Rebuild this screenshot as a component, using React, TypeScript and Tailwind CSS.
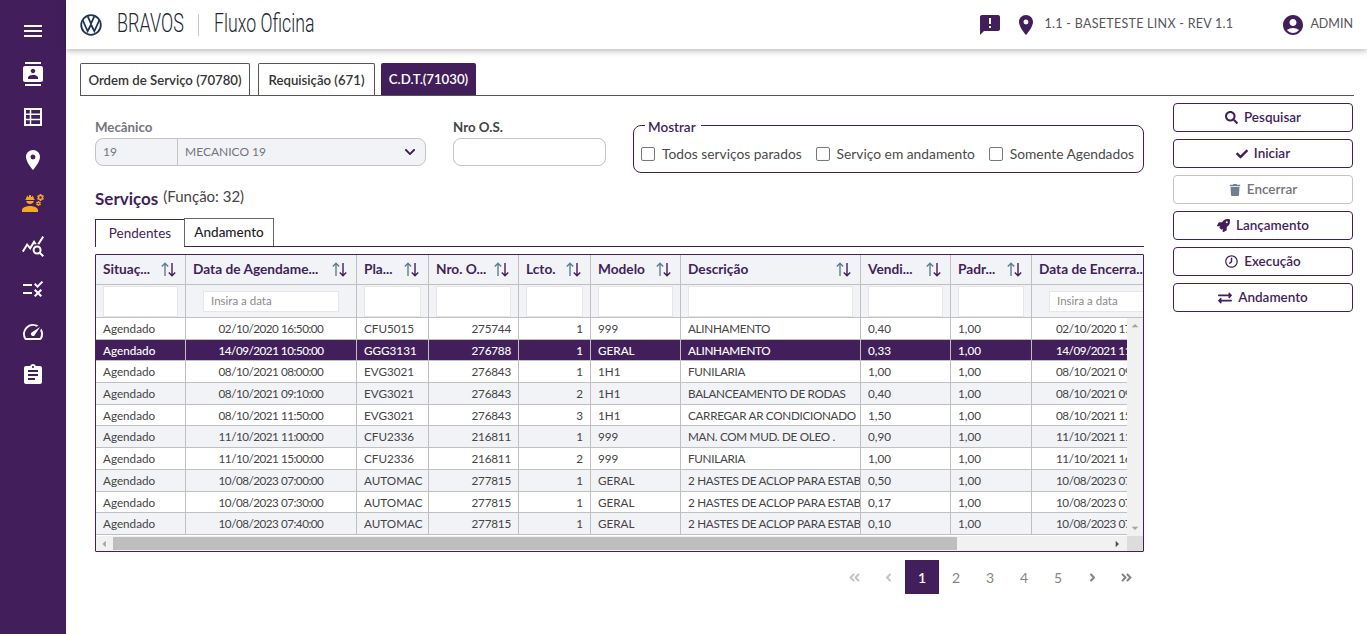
import React from "react";
import {
  MdMenu, MdContacts, MdLocationOn, MdEngineering, MdQueryStats, MdRule, MdAssignment, MdAnnouncement, MdAccountCircle, MdSpeed, MdArrowDropUp, MdArrowDropDown, MdArrowLeft, MdArrowRight,
} from "react-icons/md";
import { FaSearch, FaCheck, FaTrash, FaRocket, FaRegClock, FaExchangeAlt, FaChevronDown, FaAngleDoubleLeft, FaAngleLeft, FaAngleRight, FaAngleDoubleRight } from "react-icons/fa";

const cols = [
  { t: "Situaç...", c: "" },
  { t: "Data de Agendame...", c: "text-center tracking-[-0.5px]", date: true },
  { t: "Pla...", c: "" },
  { t: "Nro. O...", c: "text-right tracking-[-0.2px]" },
  { t: "Lcto.", c: "text-right" },
  { t: "Modelo", c: "" },
  { t: "Descrição", c: "tracking-[-0.3px]" },
  { t: "Vendi...", c: "" },
  { t: "Padr...", c: "" },
  { t: "Data de Encerra...", c: "text-center tracking-[-0.5px]", date: true, nosort: true },
];

const rows = [
  ["Agendado", "02/10/2020 16:50:00", "CFU5015", "275744", "1", "999", "ALINHAMENTO", "0,40", "1,00", "02/10/2020 17:10:00"],
  ["Agendado", "14/09/2021 10:50:00", "GGG3131", "276788", "1", "GERAL", "ALINHAMENTO", "0,33", "1,00", "14/09/2021 11:10:00"],
  ["Agendado", "08/10/2021 08:00:00", "EVG3021", "276843", "1", "1H1", "FUNILARIA", "1,00", "1,00", "08/10/2021 09:00:00"],
  ["Agendado", "08/10/2021 09:10:00", "EVG3021", "276843", "2", "1H1", "BALANCEAMENTO DE RODAS", "0,40", "1,00", "08/10/2021 09:30:00"],
  ["Agendado", "08/10/2021 11:50:00", "EVG3021", "276843", "3", "1H1", "CARREGAR AR CONDICIONADO", "1,50", "1,00", "08/10/2021 15:20:00"],
  ["Agendado", "11/10/2021 11:00:00", "CFU2336", "216811", "1", "999", "MAN. COM MUD. DE OLEO .", "0,90", "1,00", "11/10/2021 11:50:00"],
  ["Agendado", "11/10/2021 15:00:00", "CFU2336", "216811", "2", "999", "FUNILARIA", "1,00", "1,00", "11/10/2021 16:00:00"],
  ["Agendado", "10/08/2023 07:00:00", "AUTOMAC", "277815", "1", "GERAL", "2 HASTES DE ACLOP PARA ESTABILIZADOR", "0,50", "1,00", "10/08/2023 07:30:00"],
  ["Agendado", "10/08/2023 07:30:00", "AUTOMAC", "277815", "1", "GERAL", "2 HASTES DE ACLOP PARA ESTABILIZADOR", "0,17", "1,00", "10/08/2023 07:40:00"],
  ["Agendado", "10/08/2023 07:40:00", "AUTOMAC", "277815", "1", "GERAL", "2 HASTES DE ACLOP PARA ESTABILIZADOR", "0,10", "1,00", "10/08/2023 07:50:00"],
];

const gridCols = "grid-cols-[90px_171px_72px_90px_72px_90px_180px_90px_81px_153px]";

function SortIcon() {
  return (
    <svg width="17" height="15" viewBox="0 0 17 15" fill="none" strokeWidth="1.4" className="shrink-0">
      <path d="M5 14V1.5M1.8 4.6 5 1.2l3.2 3.4" stroke="#5f7f8f" />
      <path d="M12 1v12.5M8.8 10.4l3.2 3.4 3.2-3.4" stroke="#421f5a" />
    </svg>
  );
}

function VwLogo() {
  return (
    <svg width="22" height="22" viewBox="0 0 44 44" fill="none" stroke="#1f3258">
      <circle cx="22" cy="22" r="19.6" strokeWidth="3.6" />
      <path d="M15.5 4.8 22 19l6.5-14.2M5.5 12.5 15.3 34.5 21.6 22h.8l6.3 12.5 9.8-22" strokeWidth="3.6" strokeLinejoin="miter" />
    </svg>
  );
}

function GridIcon() {
  return (
    <svg width="18" height="18" viewBox="0 0 18 18" fill="none" stroke="#fff" strokeWidth="1.5">
      <rect x="1" y="1" width="16" height="16" strokeWidth="2" />
      <path d="M6.5 1v16M1 6.3h16M1 11.6h16" />
    </svg>
  );
}

function ActionButton({ icon, label, disabled }: { icon: React.ReactNode; label: string; disabled?: boolean }) {
  return (
    <button
      className={
        "h-[29px] w-full flex items-center justify-center gap-[6px] rounded-[4px] border bg-white text-[13.5px] font-semibold " +
        (disabled ? "border-[#c4c4c4] text-[#74747c]" : "border-[#421f5a] text-[#421f5a]")
      }
    >
      {icon}
      <span>{label}</span>
    </button>
  );
}

function Check({ label }: { label: string }) {
  return (
    <label className="flex items-center gap-[7px] text-[13.8px] text-[#4a4a4a]">
      <span className="w-[14px] h-[14px] rounded-[2px] border border-[#777] bg-white shrink-0" />
      {label}
    </label>
  );
}

function Pager({ children, active, muted }: { children: React.ReactNode; active?: boolean; muted?: boolean }) {
  return (
    <span
      className={
        "w-[34px] h-[34px] flex items-center justify-center text-[14px] " +
        (active ? "bg-[#421f5a] text-white font-semibold" : muted ? "text-[#c4c4c4]" : "text-[#858585]")
      }
    >
      {children}
    </span>
  );
}

export default function App() {
  return (
    <div className="flex h-screen w-full overflow-hidden bg-white font-['Lato','Noto_Sans',sans-serif] text-[#444]">
      <aside className="w-[66px] shrink-0 bg-[#421f5a] flex flex-col items-center pt-[19px] gap-[19px] text-white">
        <MdMenu size={24} />
        <MdContacts size={24} />
        <span className="my-[3px]"><GridIcon /></span>
        <MdLocationOn size={24} />
        <MdEngineering size={24} className="text-[#f7a823]" />
        <MdQueryStats size={24} />
        <MdRule size={24} />
        <MdSpeed size={24} />
        <MdAssignment size={24} />
      </aside>

      <div className="flex-1 min-w-0 flex flex-col">
        <header className="h-[49px] shrink-0 bg-white shadow-[0_2px_6px_rgba(0,0,0,0.28)] flex items-center pl-[14px] pr-[14px] relative">
          <VwLogo />
          <span className="ml-[15px] mb-[2px] w-[66px] text-[25px] font-light text-[#1c2733] font-['Roboto',sans-serif] whitespace-nowrap inline-block origin-left scale-x-[0.72]">BRAVOS</span>
          <span className="ml-[15px] w-px h-[22px] bg-[#c9c9c9]" />
          <span className="ml-[15px] mb-[2px] text-[25px] font-light text-[#1c2733] font-['Roboto',sans-serif] whitespace-nowrap inline-block origin-left scale-x-[0.71]">Fluxo Oficina</span>
          <div className="ml-auto flex items-center text-[12.5px] text-[#55555c]">
            <MdAnnouncement size={24} className="text-[#421f5a]" />
            <MdLocationOn size={24} className="ml-[12px] text-[#421f5a]" />
            <span className="ml-[7px] tracking-[0.28px]">1.1 - BASETESTE LINX - REV 1.1</span>
            <MdAccountCircle size={24} className="ml-[48px] text-[#421f5a]" />
            <span className="ml-[5px]">ADMIN</span>
          </div>
        </header>

        <main className="flex-1 min-h-0 pl-[14px] pr-[13px] pt-[15px]">
          <nav className="flex items-end border-b border-[#555] h-[32px]">
            <span className="h-[32px] w-[170px] pt-[2px] border border-b-0 border-[#555] rounded-t-[2px] flex items-center justify-center text-[13.2px] font-semibold text-[#333]">Ordem de Serviço (70780)</span>
            <span className="ml-[8px] h-[32px] w-[117px] pt-[2px] border border-b-0 border-[#555] rounded-t-[2px] flex items-center justify-center text-[13.2px] font-semibold text-[#333]">Requisição (671)</span>
            <span className="ml-[6px] h-[32px] w-[95px] pt-[2px] bg-[#421f5a] rounded-t-[2px] flex items-center justify-center text-[13.2px] font-semibold text-white">C.D.T.(71030)</span>
          </nav>

          <div className="flex">
            <section className="ml-[15px] w-[1049px]">
              <div className="flex items-start pt-[22px] h-[83px]">
                <div className="mt-[1px] w-[331px]">
                  <div className="text-[13.3px] font-bold text-[#75757d] leading-[16px] mb-[3px]">Mecânico</div>
                  <div className="h-[28px] flex items-center rounded-[8px] border border-[#c4c4c4] bg-[#f2f3f7] text-[12px] text-[#74747c]">
                    <span className="w-[82px] pl-[7px] border-r border-[#c4c4c4] h-full flex items-center">19</span>
                    <span className="flex-1 pl-[7px]">MECANICO 19</span>
                    <FaChevronDown size={12} className="text-[#421f5a] mr-[9px]" />
                  </div>
                </div>
                <div className="mt-[1px] ml-[27px] w-[153px]">
                  <div className="text-[13.3px] font-bold text-[#444] leading-[16px] mb-[3px]">Nro O.S.</div>
                  <div className="h-[28px] rounded-[8px] border border-[#c4c4c4] bg-white" />
                </div>
                <fieldset className="ml-[27px] -mt-[3px] w-[511px] h-[58px] rounded-[8px] border border-[#421f5a] px-[7px]">
                  <legend className="ml-[4px] pl-[3px] pr-[5px] pt-[4px] text-[13.5px] font-semibold text-[#421f5a] leading-[16px]">Mostrar</legend>
                  <div className="flex items-center justify-between pt-[9px] pr-[2px]">
                    <Check label="Todos serviços parados" />
                    <Check label="Serviço em andamento" />
                    <Check label="Somente Agendados" />
                  </div>
                </fieldset>
              </div>

              <div className="flex items-baseline gap-[5px] h-[38px] pt-[7px]">
                <span className="text-[17px] font-bold text-[#421f5a]">Serviços</span>
                <span className="text-[15px] text-[#444] relative -top-[3px]">(Função: 32)</span>
              </div>

              <div className="flex items-end border-b border-[#421f5a] h-[28px] mt-[2px]">
                <span className="h-[28px] w-[90px] border border-b-0 border-[#421f5a] bg-white -mb-px pb-px flex items-center justify-center text-[13.5px] text-[#421f5a]">Pendentes</span>
                <span className="h-[28px] w-[90px] -ml-px border border-b-0 border-[#666] flex items-center justify-center text-[13.5px] font-medium text-[#222]">Andamento</span>
              </div>

              <div className="mt-[7px] h-[298px] border border-[#421f5a] rounded-[1px] flex flex-col overflow-hidden text-[11.7px]">
                <div className="w-[1047px] overflow-hidden shrink-0">
                  <div className={"grid bg-[#f2f3f7] w-[1089px] " + gridCols}>
                    {cols.map((c, i) => (
                      <div key={i} className="h-[30px] border-r border-b border-[#c0c0c0] flex items-center justify-between pl-[7px] pr-[8px] last:border-r-0">
                        <span className="text-[13.7px] font-bold text-[#421f5a] whitespace-nowrap">{c.t}</span>
                        {!c.nosort && <SortIcon />}
                      </div>
                    ))}
                    {cols.map((c, i) => (
                      <div key={i} className="h-[33px] border-r border-b border-[#c0c0c0] flex items-center px-[7px] last:border-r-0">
                        {c.date ? (
                          <div className="h-[21px] w-full mx-[10px] bg-white border border-[#e6e6e6] pl-[7px] flex items-center text-[11.5px] text-[#8a8a8a] whitespace-nowrap">Insira a data</div>
                        ) : (
                          <div className="h-[31px] w-full bg-white border border-[#e6e6e6]" />
                        )}
                      </div>
                    ))}
                  </div>
                </div>

                <div className="flex flex-1 min-h-0">
                  <div className="w-[1031px] overflow-hidden shrink-0">
                    {rows.map((r, i) => (
                      <div
                        key={i}
                        className={"grid w-[1089px] h-[21.7px] " + gridCols + " " + (i === 1 ? "bg-[#421f5a] text-white font-medium" : i % 2 === 0 ? "bg-white" : "bg-[#f2f3f7]")}
                      >
                        {r.map((v, j) => (
                          <div
                            key={j}
                            className={"overflow-hidden whitespace-nowrap pl-[7px] leading-[21px] border-b border-r border-[#c0c0c0] last:border-r-0 " + cols[j].c + (j === 6 ? " pr-0" : " pr-[7px]")}
                          >
                            {v}
                          </div>
                        ))}
                      </div>
                    ))}
                  </div>
                  <div className="flex-1 bg-[#f1f1f1] flex flex-col justify-between items-center text-[#a3a3a3]">
                    <MdArrowDropUp size={16} />
                    <MdArrowDropDown size={16} />
                  </div>
                </div>

                <div className="h-[15px] shrink-0 flex bg-[#f1f1f1] items-center">
                  <div className="w-[1031px] flex items-center shrink-0">
                    <MdArrowLeft size={16} className="text-[#a3a3a3] w-[17px] shrink-0" />
                    <div className="h-[13px] w-[844px] bg-[#bebebe]" />
                    <div className="flex-1 flex justify-end pr-[2px]">
                      <MdArrowRight size={16} className="text-[#505050]" />
                    </div>
                  </div>
                  <div className="flex-1 h-full bg-[#dcdcdc]" />
                </div>
              </div>

              <div className="mt-[8px] pr-px flex justify-end">
                <Pager muted><FaAngleDoubleLeft size={13} /></Pager>
                <Pager muted><FaAngleLeft size={13} /></Pager>
                <Pager active>1</Pager>
                <Pager>2</Pager>
                <Pager>3</Pager>
                <Pager>4</Pager>
                <Pager>5</Pager>
                <Pager><FaAngleRight size={13} /></Pager>
                <Pager><FaAngleDoubleRight size={13} /></Pager>
              </div>
            </section>

            <aside className="ml-[29px] w-[180px] pt-[7px] flex flex-col gap-[7px]">
              <ActionButton icon={<FaSearch size={13} />} label="Pesquisar" />
              <ActionButton icon={<FaCheck size={12} />} label="Iniciar" />
              <ActionButton disabled icon={<FaTrash size={12} className="text-[#6f7f8f]" />} label="Encerrar" />
              <ActionButton icon={<FaRocket size={13} />} label="Lançamento" />
              <ActionButton icon={<FaRegClock size={13} className="-scale-x-100" />} label="Execução" />
              <ActionButton icon={<FaExchangeAlt size={14} />} label="Andamento" />
            </aside>
          </div>
        </main>
      </div>
    </div>
  );
}
